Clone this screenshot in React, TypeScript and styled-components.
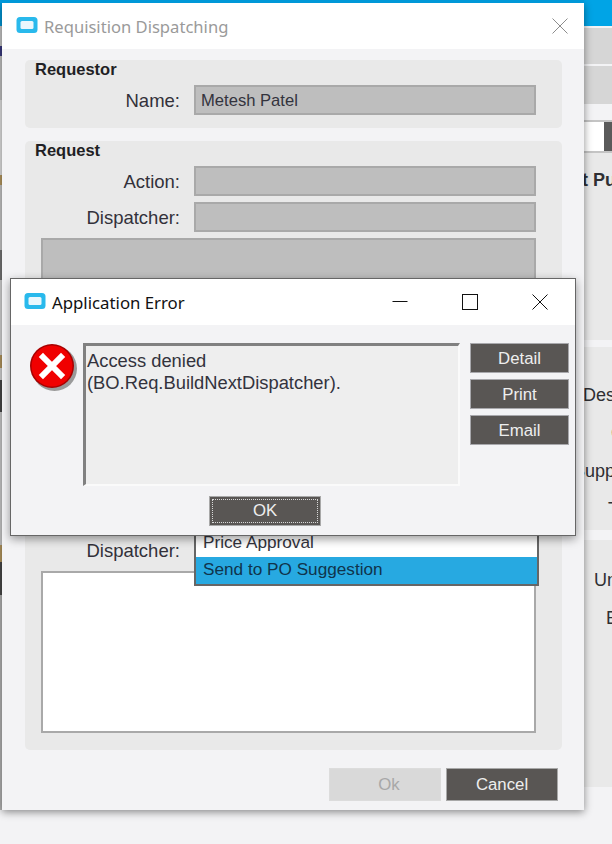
import React from "react";
import styled, { createGlobalStyle } from "styled-components";

const GlobalStyle = createGlobalStyle`
	html, body {
		margin: 0;
		padding: 0;
		background-color: #f3f3f5;
	}
	* {
		box-sizing: border-box;
	}
`;

const Desktop = styled.div`
	position: relative;
	width: 612px;
	height: 844px;
	overflow: hidden;
	font-family: "Liberation Sans", Arial, sans-serif;
	color: #2f2f33;
`;

/* the application that sits behind both dialogs */
const BackApp = styled.div`
	position: absolute;
	top: 0;
	left: 0;
	width: 612px;
	height: 810px;
	display: flex;
	justify-content: space-between;
`;

const BackEdge = styled.div`
	width: 2px;
	display: flex;
	flex-direction: column;
`;

const EdgeBit = styled.div<{ $h: number; $c: string }>`
	height: ${(p) => p.$h}px;
	background-color: ${(p) => p.$c};
`;

const BackStrip = styled.div`
	width: 28px;
	display: flex;
	flex-direction: column;
	overflow: hidden;
`;

const BackTitle = styled.div`
	height: 26px;
	flex-shrink: 0;
	background-color: #00a4e6;
`;

const BackRow = styled.div<{ $h: number }>`
	height: ${(p) => p.$h}px;
	flex-shrink: 0;
	margin-top: 2px;
	background-color: #d6d6d6;
`;

const BackInput = styled.div`
	height: 33px;
	flex-shrink: 0;
	margin-top: 16px;
	padding-right: 8px;
	background-color: #5a5a5a;
	border-top: 2px solid #c4c4c4;
	border-bottom: 2px solid #c4c4c4;
`;

const BackInputFill = styled.div`
	height: 100%;
	background-color: #fff;
`;

const BackPanel = styled.div<{ $h: number; $top: number; $gap: number }>`
	height: ${(p) => p.$h}px;
	flex-shrink: 0;
	margin-top: ${(p) => p.$gap}px;
	padding-top: ${(p) => p.$top}px;
	background-color: #e9e9e9;
`;

const BackLabel = styled.div<{ $x: number; $bold?: boolean }>`
	height: 38px;
	line-height: 38px;
	margin-left: ${(p) => p.$x}px;
	font-size: 18px;
	font-weight: ${(p) => (p.$bold ? "bold" : "normal")};
	white-space: nowrap;
`;

const Window = styled.div`
	position: absolute;
	top: 3px;
	left: 2px;
	width: 582px;
	height: 807px;
	display: flex;
	flex-direction: column;
	background-color: #f3f3f5;
	box-shadow: 0 2px 8px rgba(0, 0, 0, 0.45);
`;

const TopBand = styled.div`
	position: absolute;
	top: 0;
	left: 0;
	width: 584px;
	height: 3px;
	background-color: #0098d8;
`;

const TitleBar = styled.div`
	height: 46px;
	flex-shrink: 0;
	display: flex;
	align-items: center;
	background-color: #fff;
`;

const MainTitleBar = styled(TitleBar)`
	padding: 0 16px 0 13px;
	gap: 5px;
`;

const MainTitle = styled.span`
	font-family: "Noto Sans", "Open Sans", sans-serif;
	font-size: 16.6px;
	color: #9a9a9a;
	margin-right: auto;
`;

const MainBody = styled.div`
	flex: 1;
	display: flex;
	flex-direction: column;
	padding: 11px 22px 0 23px;
`;

const Group = styled.section<{ $grow?: boolean }>`
	display: flex;
	flex-direction: column;
	gap: 6px;
	padding-bottom: ${(p) => (p.$grow ? 17 : 13)}px;
	margin-bottom: 13px;
	background-color: #e9e9e9;
	border-radius: 5px;
	${(p) => (p.$grow ? "flex: 1;" : "")}
`;

const GroupTitle = styled.h3`
	height: 18px;
	margin: 0 0 1px;
	padding-left: 10px;
	line-height: 18px;
	font-size: 16.5px;
	font-weight: bold;
	color: #1f1f24;
`;

const Row = styled.div`
	display: grid;
	grid-template-columns: 155px 342px;
	column-gap: 14px;
	align-items: center;
`;

const Label = styled.label`
	padding-top: 2px;
	text-align: right;
	font-size: 18.5px;
	color: #33313a;
	white-space: nowrap;
`;

const Field = styled.div`
	position: relative;
	height: 30px;
	padding-left: 5px;
	line-height: 28px;
	font-size: 16.6px;
	color: #33333d;
	background-color: #bebebe;
	border: 2px solid #a9a9a9;
`;

const TextArea = styled.div<{ $disabled?: boolean }>`
	margin-left: 16px;
	width: 495px;
	height: ${(p) => (p.$disabled ? "auto" : "162px")};
	${(p) => (p.$disabled ? "flex: 1;" : "")}
	background-color: ${(p) => (p.$disabled ? "#bebebe" : "#fff")};
	border: 2px solid #a9a9a9;
`;

const DropList = styled.ul`
	position: absolute;
	top: -6px;
	left: -2px;
	width: 345px;
	margin: 0;
	padding: 0;
	list-style: none;
	background-color: #fff;
	border: 1px solid #666;
	border-width: 0 2px 2px 2px;
	z-index: 1;
`;

const DropItem = styled.li<{ $selected?: boolean }>`
	height: ${(p) => (p.$selected ? 27 : 25)}px;
	margin-top: ${(p) => (p.$selected ? 1 : 0)}px;
	padding-left: 7px;
	line-height: ${(p) => (p.$selected ? 24 : 22)}px;
	font-size: 17.2px;
	background-color: ${(p) => (p.$selected ? "#27a9e1" : "#fff")};
	color: ${(p) => (p.$selected ? "#10344c" : "#33333d")};
`;

const Footer = styled.div`
	height: 33px;
	margin: 5px 4px 9px 0;
	display: flex;
	justify-content: flex-end;
	gap: 5px;
`;

const Button = styled.button<{ $disabled?: boolean }>`
	padding: 0;
	font-family: inherit;
	font-size: 16.8px;
	color: ${(p) => (p.$disabled ? "#a8a8a8" : "#eeeeee")};
	background-color: ${(p) => (p.$disabled ? "#d9d9d9" : "#595654")};
	border: 1px solid ${(p) => (p.$disabled ? "#dcdcdc" : "#a8a8a8")};
`;

const FooterButton = styled(Button)`
	width: 112px;
	height: 33px;
	padding-left: ${(p) => (p.$disabled ? 8 : 0)}px;
`;

const Dialog = styled.div`
	position: absolute;
	top: 278px;
	left: 10px;
	width: 566px;
	height: 258px;
	display: flex;
	flex-direction: column;
	background-color: #f3f3f5;
	border: 1px solid #666;
	box-shadow: 0 3px 9px rgba(0, 0, 0, 0.4);
	z-index: 2;
`;

const DialogTitleBar = styled(TitleBar)`
	padding-left: 12px;
`;

const DialogTitle = styled.span`
	margin-left: 5px;
	font-family: "Noto Sans", "Open Sans", sans-serif;
	font-size: 16.8px;
	color: #111;
	margin-right: auto;
`;

const WindowControl = styled.span`
	width: 70px;
	display: flex;
	justify-content: center;
	align-items: center;
`;

const DialogBody = styled.div`
	display: flex;
	align-items: flex-start;
	padding: 18px 6px 0 18px;
`;

const ErrorIcon = styled.svg`
	width: 48px;
	height: 48px;
	flex-shrink: 0;
	margin-right: 6px;
`;

const MessageBox = styled.div`
	width: 377px;
	height: 143px;
	padding: 4px 1px;
	font-size: 18.35px;
	line-height: 22px;
	color: #33333d;
	background-color: #eeeeee;
	border-style: solid;
	border-width: 3px 2px 2px 3px;
	border-color: #808080 #fafafa #fafafa #808080;
`;

const SideButtons = styled.div`
	width: 99px;
	margin-left: 10px;
	display: flex;
	flex-direction: column;
	gap: 6px;
`;

const SideButton = styled(Button)`
	height: 30px;
	padding-top: 1px;
	border-color: #a8a8ac;
`;

const DialogFooter = styled.div`
	padding: 10px 0 0 198px;
`;

const OkButton = styled(Button)`
	width: 112px;
	height: 30px;
	padding: 2px;
	border-color: #a8a8a8;
`;

const OkFocus = styled.span`
	display: block;
	height: 100%;
	line-height: 22px;
	border: 1px dotted #d8d8d8;
`;

const AppIcon = () => (
	<svg width="24" height="20" viewBox="0 0 24 20">
		<rect x="1.5" y="1" width="21" height="16" rx="3.5" fill="#29b9ec" />
		<rect x="5.5" y="5" width="13" height="8" rx="1.5" fill="#eaf7fd" />
	</svg>
);

const CloseGlyph = ({ color }: { color: string }) => (
	<svg width="16" height="16" viewBox="0 0 16 16" fill="none" stroke={color} strokeWidth="1">
		<path d="M0.5 0.5L15.5 15.5M15.5 0.5L0.5 15.5" />
	</svg>
);

const edgeBits = [
	{ h: 26, c: "#0098d8" },
	{ h: 20, c: "#c8c8c8" },
	{ h: 10, c: "#3a3a80" },
	{ h: 44, c: "#c4c4c4" },
	{ h: 75, c: "#e4e4e4" },
	{ h: 10, c: "#b89a60" },
	{ h: 65, c: "#c8c8c8" },
	{ h: 30, c: "#777777" },
	{ h: 75, c: "#d8d8d8" },
	{ h: 13, c: "#b89a60" },
	{ h: 12, c: "#d8d8d8" },
	{ h: 32, c: "#4a4a4a" },
	{ h: 133, c: "#d0d0d0" },
	{ h: 17, c: "#b89a60" },
	{ h: 33, c: "#4a4a4a" },
	{ h: 215, c: "#b4b4b4" },
];

const App = () => {
	return (
		<Desktop>
			<GlobalStyle />
			<BackApp>
				<BackEdge>
					{edgeBits.map((bit, i) => (
						<EdgeBit key={i} $h={bit.h} $c={bit.c} />
					))}
				</BackEdge>
				<BackStrip>
					<BackTitle />
					<BackRow $h={36} />
					<BackRow $h={38} />
					<BackInput>
						<BackInputFill />
					</BackInput>
					<BackPanel $h={187} $top={8} $gap={0}>
						<BackLabel $x={-2} $bold>
							t Purchase
						</BackLabel>
					</BackPanel>
					<BackPanel $h={183} $top={29} $gap={7}>
						<BackLabel $x={-1}>Description:</BackLabel>
						<BackLabel $x={27}>C</BackLabel>
						<BackLabel $x={-11}>Supplier:</BackLabel>
						<BackLabel $x={24}>T</BackLabel>
					</BackPanel>
					<BackPanel $h={247} $top={21} $gap={10}>
						<BackLabel $x={10}>Unit:</BackLabel>
						<BackLabel $x={22}>E</BackLabel>
					</BackPanel>
				</BackStrip>
			</BackApp>

			<Window>
				<MainTitleBar>
					<AppIcon />
					<MainTitle>Requisition Dispatching</MainTitle>
					<CloseGlyph color="#8c8c8c" />
				</MainTitleBar>
				<MainBody>
					<Group>
						<GroupTitle>Requestor</GroupTitle>
						<Row>
							<Label>Name:</Label>
							<Field>Metesh Patel</Field>
						</Row>
					</Group>
					<Group $grow>
						<GroupTitle>Request</GroupTitle>
						<Row>
							<Label>Action:</Label>
							<Field />
						</Row>
						<Row>
							<Label>Dispatcher:</Label>
							<Field />
						</Row>
						<TextArea $disabled />
						<Row>
							<Label>Action:</Label>
							<Field />
						</Row>
						<Row>
							<Label>Dispatcher:</Label>
							<Field>
								<DropList>
									<DropItem>Price Approval</DropItem>
									<DropItem $selected>Send to PO Suggestion</DropItem>
								</DropList>
							</Field>
						</Row>
						<TextArea />
					</Group>
					<Footer>
						<FooterButton $disabled>Ok</FooterButton>
						<FooterButton>Cancel</FooterButton>
					</Footer>
				</MainBody>
			</Window>
			<TopBand />

			<Dialog>
				<DialogTitleBar>
					<AppIcon />
					<DialogTitle>Application Error</DialogTitle>
					<WindowControl>
						<svg width="16" height="16" viewBox="0 0 16 16" fill="none" stroke="#111">
							<path d="M0.5 7.5H15.5" />
						</svg>
					</WindowControl>
					<WindowControl>
						<svg width="16" height="16" viewBox="0 0 16 16" fill="none" stroke="#111">
							<rect x="0.5" y="0.5" width="15" height="15" />
						</svg>
					</WindowControl>
					<WindowControl>
						<CloseGlyph color="#111" />
					</WindowControl>
				</DialogTitleBar>
				<DialogBody>
					<ErrorIcon viewBox="0 0 48 48">
						<circle cx="25.5" cy="25.5" r="22.5" fill="#9a9a9a" />
						<circle cx="23" cy="23" r="22" fill="#a80000" />
						<circle cx="23" cy="23" r="20.5" fill="#f00000" />
						<path d="M14 14L32 32M32 14L14 32" stroke="#fff" strokeWidth="6" strokeLinecap="square" />
					</ErrorIcon>
					<MessageBox>
						Access denied
						<br />
						(BO.Req.BuildNextDispatcher).
					</MessageBox>
					<SideButtons>
						<SideButton>Detail</SideButton>
						<SideButton>Print</SideButton>
						<SideButton>Email</SideButton>
					</SideButtons>
				</DialogBody>
				<DialogFooter>
					<OkButton>
						<OkFocus>OK</OkFocus>
					</OkButton>
				</DialogFooter>
			</Dialog>
		</Desktop>
	);
};

export default App;
